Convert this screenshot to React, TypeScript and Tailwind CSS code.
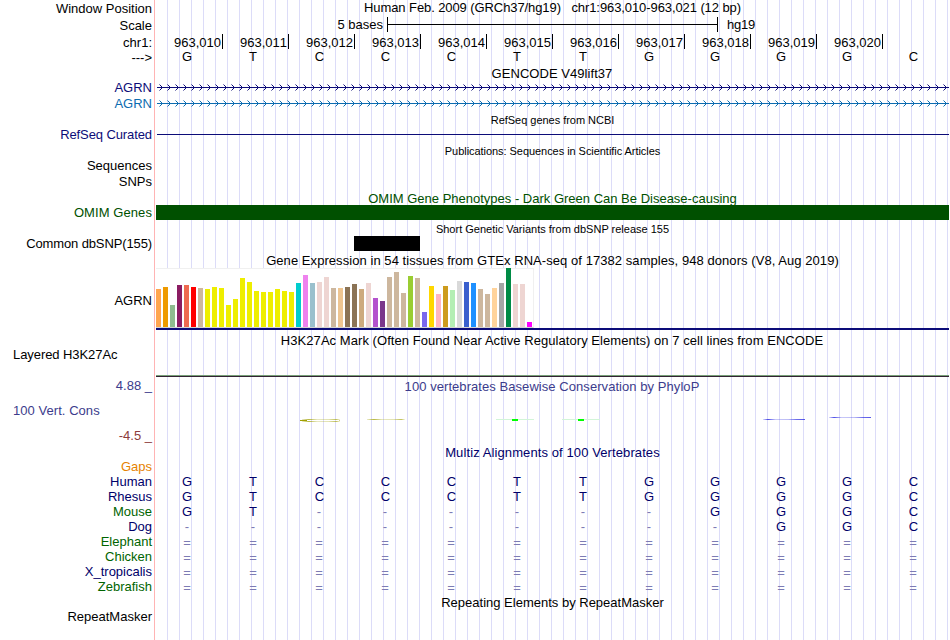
import React from 'react';
import clsx from 'clsx';

const POSITIONS = [
  '963,010', '963,011', '963,012', '963,013', '963,014', '963,015',
  '963,016', '963,017', '963,018', '963,019', '963,020',
];

const ALIGNMENTS = [
  { species: 'Human', color: 'text-[#00006a]', bases: 'GTCCCTTGGGGC' },
  { species: 'Rhesus', color: 'text-[#00006a]', bases: 'GTCCCTTGGGGC' },
  { species: 'Mouse', color: 'text-[#006400]', bases: 'GT------GGGC' },
  { species: 'Dog', color: 'text-[#00006a]', bases: '---------GGC' },
  { species: 'Elephant', color: 'text-[#006400]', bases: '============' },
  { species: 'Chicken', color: 'text-[#006400]', bases: '============' },
  { species: 'X_tropicalis', color: 'text-[#00006a]', bases: '============' },
  { species: 'Zebrafish', color: 'text-[#006400]', bases: '============' },
];

// [bar height, tissue color]
const GTEX: [number, string][] = [
  [38, '#ffa54f'], [40, '#ee9a00'], [22, '#8fbc8f'], [42, '#8b1c62'], [42, '#ee6a50'], [40, '#ff0000'],
  [39, '#cdb79e'], [38, '#eeee00'], [40, '#eeee00'], [39, '#eeee00'], [22, '#eeee00'], [28, '#eeee00'],
  [49, '#eeee00'], [45, '#eeee00'], [36, '#eeee00'], [35, '#eeee00'], [35, '#eeee00'], [38, '#eeee00'],
  [36, '#eeee00'], [35, '#eeee00'], [44, '#00cdcd'], [52, '#ee82ee'], [44, '#9ac0cd'], [45, '#eed5d2'],
  [50, '#eed5d2'], [39, '#cdb79e'], [39, '#eec591'], [40, '#8b7355'], [43, '#8b7355'], [38, '#cdaa7d'],
  [44, '#eed5d2'], [29, '#b452cd'], [26, '#7a378b'], [50, '#cdb79e'], [55, '#cdb79e'], [34, '#cdb79e'],
  [51, '#9acd32'], [49, '#cdb79e'], [15, '#7a67ee'], [41, '#ffd700'], [33, '#ffb6c1'], [41, '#cd9b1d'],
  [37, '#b4eeb4'], [46, '#d9d9d9'], [45, '#3a5fcd'], [44, '#1e90ff'], [38, '#cdb79e'], [33, '#cdb79e'],
  [39, '#ffd39b'], [44, '#a6a6a6'], [59, '#008b45'], [43, '#eed5d2'], [43, '#eed5d2'], [5, '#ff00ff'],
];

const Label = ({ className, children }: { className?: string; children: React.ReactNode }) => (
  <div className={clsx('h-[15px] shrink-0 whitespace-pre text-right', className)}>{children}</div>
);

const Title = ({ small, className, children }: { small?: boolean; className?: string; children: React.ReactNode }) => (
  <div
    className={clsx(
      'shrink-0 whitespace-pre text-center',
      small ? 'h-[12px] text-[11px] leading-[12px]' : 'h-[15px]',
      className,
    )}
  >
    {children}
  </div>
);

const Bases = ({ bases, className }: { bases: string; className?: string }) => (
  <div className={clsx('-ml-[2px] flex h-[15px] shrink-0', className)}>
    {bases.split('').map((b, i) => (
      <span
        key={i}
        className={clsx(
          'w-[66px] shrink-0 text-center',
          b === 'C' && 'pl-px',
          b === '=' && 'pt-px',
          (b === '-' || b === '=') && 'text-[#7c7cb4]',
        )}
      >
        {b}
      </span>
    ))}
  </div>
);

const Intron = ({ color, className }: { color: string; className?: string }) => {
  const starts = Array.from({ length: 99 }, (_, i) => 3 + i * 8);
  return (
    <svg className={clsx('block shrink-0', className)} width="793" height="7" shapeRendering="crispEdges" fill={color}>
      <path fillOpacity="0.5" d={starts.map((x) => `M${x} 0h1v1h-1zM${x} 6h1v1h-1z`).join('')} />
      <path d={starts.map((x) => `M${x + 1} 1h1v1h1v3h-1v1h-1v-1h1v-3h-1z`).join('')} />
      <rect x="1" y="3" width="792" height="1" />
    </svg>
  );
};

const PhyloP = () => (
  <svg className="mt-[23px] block shrink-0" width="793" height="5">
    <defs>
      <linearGradient id="olive">
        <stop offset="0" stopColor="#a0a000" stopOpacity="0.2" />
        <stop offset="0.18" stopColor="#a0a000" stopOpacity="0.75" />
        <stop offset="0.4" stopColor="#a0a000" stopOpacity="0.25" />
        <stop offset="0.7" stopColor="#a0a000" stopOpacity="0.3" />
        <stop offset="0.9" stopColor="#a0a000" stopOpacity="0.65" />
        <stop offset="1" stopColor="#a0a000" stopOpacity="0.1" />
      </linearGradient>
      <linearGradient id="blue">
        <stop offset="0" stopColor="#2020e0" stopOpacity="0.15" />
        <stop offset="0.12" stopColor="#2020e0" stopOpacity="0.8" />
        <stop offset="0.3" stopColor="#2020e0" stopOpacity="0.25" />
        <stop offset="0.6" stopColor="#2020e0" stopOpacity="0.3" />
        <stop offset="0.8" stopColor="#2020e0" stopOpacity="0.65" />
        <stop offset="1" stopColor="#2020e0" stopOpacity="0.75" />
      </linearGradient>
    </defs>
    <rect x="146" y="2" width="38" height="1" fill="url(#olive)" />
    <rect x="146" y="4" width="38" height="1" fill="url(#olive)" />
    <rect x="144" y="3" width="7" height="1" fill="#a0a000" />
    <rect x="183" y="3" width="1" height="1" fill="#d6d68c" />
    <rect x="211" y="2" width="38" height="1" fill="url(#olive)" />
    <rect x="340" y="2" width="38" height="1" fill="#d2f5d8" />
    <rect x="356" y="2" width="6" height="2" fill="#00ff00" />
    <rect x="406" y="2" width="38" height="1" fill="#d2f5d8" />
    <rect x="422" y="2" width="6" height="2" fill="#00ff00" />
    <rect x="607" y="2" width="42" height="1" fill="url(#blue)" />
    <rect x="673" y="0" width="42" height="1" fill="url(#blue)" />
  </svg>
);

const Labels = () => (
  <div className="flex w-[155px] shrink-0 flex-col border-r border-[#ffb4b4] pr-[2px] pt-px">
    <Label>Window Position</Label>
    <Label className="mt-[2px]">Scale</Label>
    <Label className="mt-[2px]">chr1:</Label>
    <Label>---&gt;</Label>
    <Label className="mt-[15px] text-[#0c0c78]">AGRN</Label>
    <Label className="mt-px text-[#0c6cb0]">AGRN</Label>
    <Label className="mt-[16px] tracking-[-0.1px] text-[#0c0c78]">RefSeq Curated</Label>
    <Label className="mt-[16px]">Sequences</Label>
    <Label className="mt-px">SNPs</Label>
    <Label className="mt-[16px] tracking-[0.08px] text-[#005000]">OMIM Genes</Label>
    <Label className="mt-[16px] tracking-[-0.12px]">Common dbSNP(155)</Label>
    <Label className="mt-[42px]">AGRN</Label>
    <Label className="mt-[39px] pl-[13px] !text-left tracking-[-0.07px]">Layered H3K27Ac</Label>
    <Label className="mt-[16px] text-[#3c3c8c]">4.88 _</Label>
    <Label className="mt-[10px] pl-[13px] !text-left tracking-[0.05px] text-[#3c3c8c]">100 Vert. Cons</Label>
    <Label className="mt-[10px] text-[#8c3c3c]">-4.5 _</Label>
    <Label className="mt-[16px] text-[#e68200]">Gaps</Label>
    {ALIGNMENTS.map((a) => (
      <Label key={a.species} className={a.color}>{a.species}</Label>
    ))}
    <Label className="mt-[15px]">RepeatMasker</Label>
  </div>
);

const Tracks = () => (
  <div className="ml-px flex w-[793px] shrink-0 flex-col bg-[linear-gradient(to_right,transparent_11px,#dcdcf8_11px)] bg-[length:12px_100%]">
    <Title className="tracking-[-0.09px]">Human Feb. 2009 (GRCh37/hg19)   chr1:963,010-963,021 (12 bp)</Title>

    {/* scale bar */}
    <div className="mt-[2px] flex h-[15px] shrink-0">
      <span className="w-[227px] text-right">5 bases</span>
      <div className="ml-[4px] flex w-[331px] items-center border-x border-black">
        <div className="h-px w-full bg-black" />
      </div>
      <span className="ml-[9px] tracking-[-0.2px]">hg19</span>
    </div>

    {/* coordinates */}
    <div className="ml-px mt-[2px] flex h-[15px] shrink-0 [font-kerning:none]">
      {POSITIONS.map((p) => (
        <span key={p} className="w-[66px] border-r border-black pr-px pt-px text-right">{p}</span>
      ))}
    </div>
    <Bases bases="GTCCCTTGGGGC" />

    <Title className="mt-[2px] pr-px tracking-[0.05px]">GENCODE V49lift37</Title>
    <Intron className="mt-[3px]" color="#0c0c78" />
    <Intron className="mt-[9px]" color="#0c6cb0" />

    <Title small className="mt-[7px] tracking-[-0.03px]">RefSeq genes from NCBI</Title>
    <div className="ml-px mt-[8px] h-px shrink-0 bg-[#0c0c78]" />

    <Title small className="mt-[10px] tracking-[-0.05px]">Publications: Sequences in Scientific Articles</Title>

    <Title className="mt-[34px] text-[#005000]">OMIM Gene Phenotypes - Dark Green Can Be Disease-causing</Title>
    <div className="-mt-px h-[15px] shrink-0 bg-[#005000]" />

    <Title small className="mt-[3px]">Short Genetic Variants from dbSNP release 155</Title>
    <div className="ml-[198px] mt-px h-[15px] w-[66px] shrink-0 bg-black" />

    <Title className="mt-[2px] tracking-[0.06px]">Gene Expression in 54 tissues from GTEx RNA-seq of 17382 samples, 948 donors (V8, Aug 2019)</Title>
    <div className="flex h-[60px] w-[378px] shrink-0 items-end gap-[2px] border border-l-0 border-[#f0f0f0] border-b-[#d2d2d2] bg-white">
      {GTEX.map(([h, color], i) => (
        <div key={i} className="w-[5px] shrink-0" style={{ height: h, backgroundColor: color }} />
      ))}
    </div>
    <div className="h-[2px] shrink-0 bg-[#0c0c78]" />

    <Title className="mt-[3px] pr-px tracking-[0.055px]">H3K27Ac Mark (Often Found Near Active Regulatory Elements) on 7 cell lines from ENCODE</Title>
    <div className="mt-[27px] h-[2px] shrink-0 border-t border-[#78a078] bg-[#322332]" />

    <Title className="mt-[2px] pr-px tracking-[0.06px] text-[#3c3c8c]">100 vertebrates Basewise Conservation by PhyloP</Title>
    <PhyloP />

    <Title className="mt-[23px] tracking-[0.1px] text-[#00006a]">Multiz Alignments of 100 Vertebrates</Title>
    <div className="mt-[14px] shrink-0">
      {ALIGNMENTS.map((a) => (
        <Bases key={a.species} bases={a.bases} className="text-[#00006a]" />
      ))}
    </div>

    <Title className="mt-px">Repeating Elements by RepeatMasker</Title>
  </div>
);

export default function App() {
  return (
    <div className="flex h-[640px] w-[950px] overflow-hidden bg-white font-['Liberation_Sans',Arial,sans-serif] text-[13px] leading-[15px] text-black">
      <Labels />
      <Tracks />
    </div>
  );
}
